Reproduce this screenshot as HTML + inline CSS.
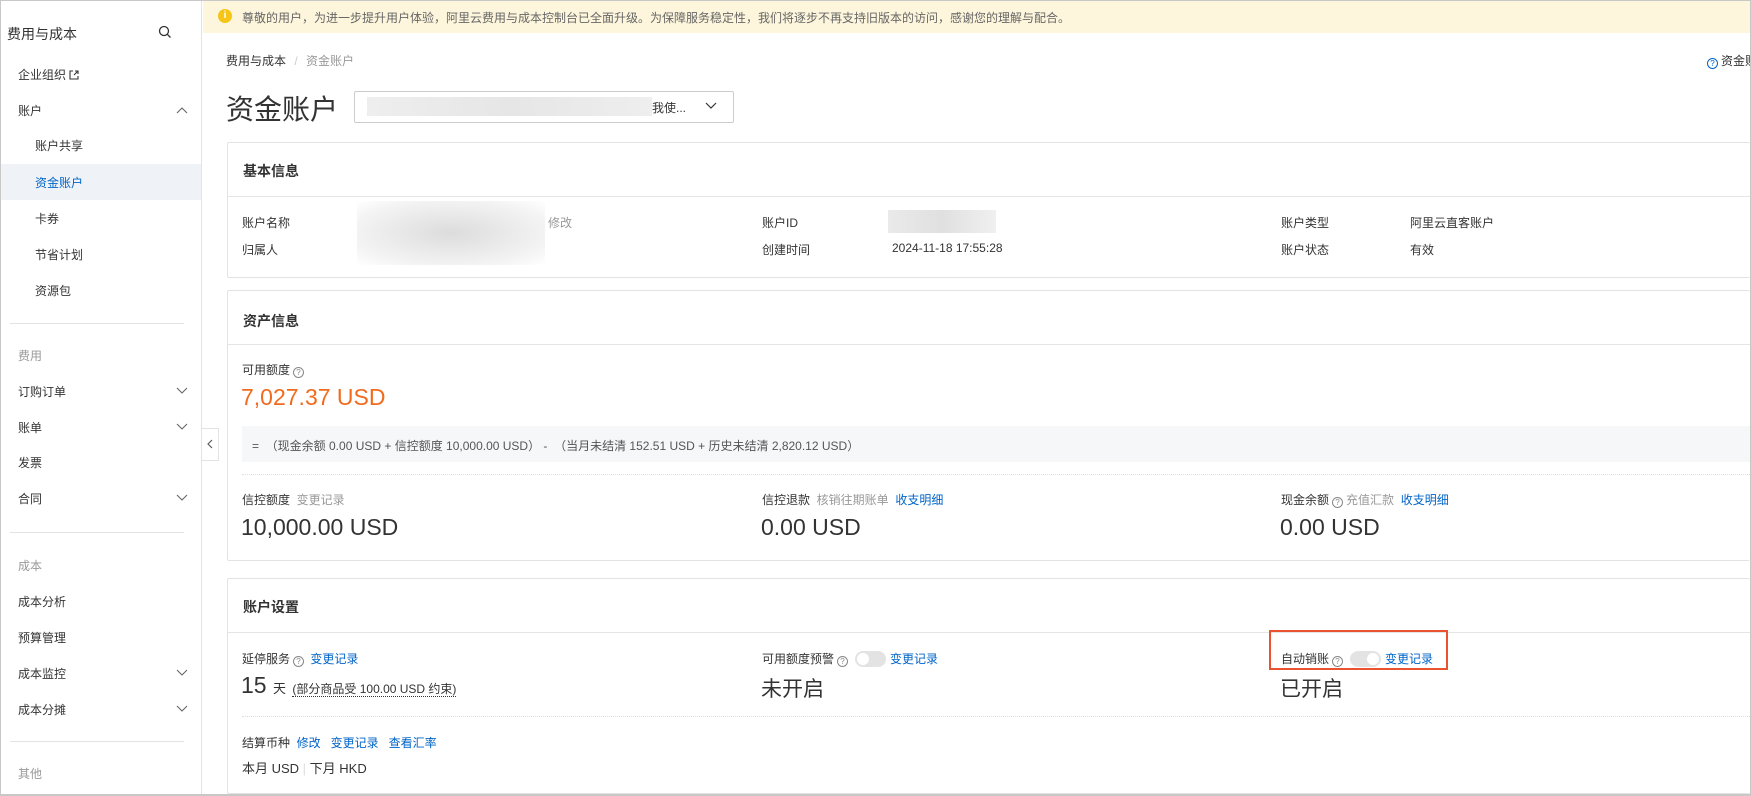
<!DOCTYPE html>
<html><head><meta charset="utf-8">
<style>
*{margin:0;padding:0;box-sizing:border-box}
body{width:1751px;height:796px;overflow:hidden;background:#fff;font-family:"Liberation Sans","Noto Sans CJK SC",sans-serif;font-size:12px;color:#333;position:relative}
.a{position:absolute;white-space:nowrap}
.frame{position:absolute;left:0;top:0;width:1751px;height:796px;border:1px solid #c8c8c8;border-bottom-width:2px;pointer-events:none}
.side{position:absolute;left:0;top:0;width:202px;height:796px;border-right:1px solid #e3e3e3;background:#fff}
.si{position:absolute;left:18px;font-size:12px;color:#333;line-height:16px}
.sub{left:35px}
.grp{color:#999}
.div{position:absolute;left:10px;width:174px;height:1px;background:#e3e3e3}
.chev{position:absolute;left:176px;width:12px;height:8px}
.card{position:absolute;left:227px;width:1523px;border:1px solid #e3e3e3;border-right:none;border-radius:2px}
.ct{position:absolute;left:15px;font-size:14px;font-weight:bold;color:#333}
.hl{position:absolute;left:0;right:0;height:1px;background:#e5e5e5}
.lbl{color:#333}
.blue{color:#0064c8}
.grey{color:#999}
.big{font-size:23px;color:#333}
.q{display:inline-block;width:11px;height:11px;border:1px solid #888;border-radius:50%;font-size:8px;line-height:9px;text-align:center;color:#888;vertical-align:-1px;margin:0 3px}
.tg{display:inline-block;width:31px;height:16px;border-radius:8px;background:#e3e3e3;position:relative;vertical-align:-4px;margin:0 4px}
.tg:after{content:"";position:absolute;top:2px;width:12px;height:12px;border-radius:50%;background:#fff}
.tg.l:after{left:2px}
.tg.r:after{right:2px}
</style></head><body>

<div class="side">
  <div class="a" style="left:7px;top:24px;font-size:14px;color:#333">费用与成本</div>
  <svg class="a" style="left:158px;top:25px" width="14" height="14" viewBox="0 0 14 14"><circle cx="6" cy="6" r="4.5" fill="none" stroke="#333" stroke-width="1.3"/><line x1="9.3" y1="9.3" x2="12.5" y2="12.5" stroke="#333" stroke-width="1.3"/></svg>
  <div class="si" style="top:67px">企业组织 <svg width="10" height="10" viewBox="0 0 10 10" style="vertical-align:-1px"><path d="M4 1H1v8h8V6M6 1h3v3M9 1L5 5" fill="none" stroke="#333" stroke-width="1.1"/></svg></div>
  <div class="si" style="top:103px">账户</div>
  <svg class="chev" style="top:106px" viewBox="0 0 12 8"><path d="M1 7L6 2l5 5" fill="none" stroke="#666" stroke-width="1.1"/></svg>
  <div class="si sub" style="top:138px">账户共享</div>
  <div class="a" style="left:0;top:164px;width:201px;height:36px;background:#eff3f8"></div>
  <div class="si sub" style="top:175px;color:#0064c8">资金账户</div>
  <div class="si sub" style="top:211px">卡券</div>
  <div class="si sub" style="top:247px">节省计划</div>
  <div class="si sub" style="top:283px">资源包</div>
  <div class="div" style="top:323px"></div>
  <div class="si grp" style="top:348px">费用</div>
  <div class="si" style="top:384px">订购订单</div>
  <svg class="chev" style="top:387px" viewBox="0 0 12 8"><path d="M1 1l5 5 5-5" fill="none" stroke="#666" stroke-width="1.1"/></svg>
  <div class="si" style="top:420px">账单</div>
  <svg class="chev" style="top:423px" viewBox="0 0 12 8"><path d="M1 1l5 5 5-5" fill="none" stroke="#666" stroke-width="1.1"/></svg>
  <div class="si" style="top:455px">发票</div>
  <div class="si" style="top:491px">合同</div>
  <svg class="chev" style="top:494px" viewBox="0 0 12 8"><path d="M1 1l5 5 5-5" fill="none" stroke="#666" stroke-width="1.1"/></svg>
  <div class="div" style="top:532px"></div>
  <div class="si grp" style="top:558px">成本</div>
  <div class="si" style="top:594px">成本分析</div>
  <div class="si" style="top:630px">预算管理</div>
  <div class="si" style="top:666px">成本监控</div>
  <svg class="chev" style="top:669px" viewBox="0 0 12 8"><path d="M1 1l5 5 5-5" fill="none" stroke="#666" stroke-width="1.1"/></svg>
  <div class="si" style="top:702px">成本分摊</div>
  <svg class="chev" style="top:705px" viewBox="0 0 12 8"><path d="M1 1l5 5 5-5" fill="none" stroke="#666" stroke-width="1.1"/></svg>
  <div class="div" style="top:741px"></div>
  <div class="si grp" style="top:766px">其他</div>
</div>
<div class="a" style="left:202px;top:428px;width:17px;height:33px;border:1px solid #e3e3e3;border-left:none;background:#fff"></div>
<svg class="a" style="left:206px;top:439px" width="8" height="10" viewBox="0 0 8 10"><path d="M6 1L2 5l4 4" fill="none" stroke="#555" stroke-width="1.1"/></svg>

<div class="a" style="left:203px;top:0;width:1548px;height:33px;background:#fdf6dc"></div>
<div class="a" style="left:218px;top:9px;width:14px;height:14px;border-radius:50%;background:#f5c518;color:#fff;font-size:10px;font-weight:bold;text-align:center;line-height:14px">i</div>
<div class="a" style="left:242px;top:9px;color:#666;font-size:12px">尊敬的用户，为进一步提升用户体验，阿里云费用与成本控制台已全面升级。为保障服务稳定性，我们将逐步不再支持旧版本的访问，感谢您的理解与配合。</div>

<div class="a" style="left:226px;top:52px;font-size:12px;color:#333">费用与成本 <span style="color:#ccc;margin:0 5px">/</span> <span style="color:#999">资金账户</span></div>
<div class="a" style="left:1704px;top:52px;font-size:12px;color:#333"><span class="q" style="border-color:#0064c8;color:#0064c8">?</span>资金账</div>

<div class="a" style="left:226px;top:88px;font-size:28px;color:#333">资金账户</div>
<div class="a" style="left:354px;top:91px;width:380px;height:32px;border:1px solid #ccc;border-radius:2px"></div>
<div class="a" style="left:367px;top:97px;width:285px;height:19px;background:linear-gradient(90deg,#eee,#e6e6e6,#eee)"></div>
<div class="a" style="left:652px;top:99px;font-size:12px;color:#333">我使...</div>
<svg class="a" style="left:705px;top:102px" width="12" height="8" viewBox="0 0 12 8"><path d="M1 1l5 5 5-5" fill="none" stroke="#333" stroke-width="1.2"/></svg>

<div class="card" style="top:142px;height:136px">
  <div class="ct" style="top:18px">基本信息</div>
  <div class="hl" style="top:53px"></div>
</div>
<div class="a lbl" style="left:242px;top:214px">账户名称</div>
<div class="a lbl" style="left:242px;top:241px">归属人</div>
<div class="a" style="left:357px;top:201px;width:188px;height:64px;background:radial-gradient(ellipse at 50% 50%,#dcdcdc,#f4f4f4 75%,#fff)"></div>
<div class="a grey" style="left:548px;top:214px">修改</div>
<div class="a lbl" style="left:762px;top:214px">账户ID</div>
<div class="a" style="left:888px;top:210px;width:108px;height:23px;background:linear-gradient(90deg,#eaeaea,#e0e0e0,#f0f0f0)"></div>
<div class="a lbl" style="left:762px;top:241px">创建时间</div>
<div class="a lbl" style="left:892px;top:241px">2024-11-18 17:55:28</div>
<div class="a lbl" style="left:1281px;top:214px">账户类型</div>
<div class="a lbl" style="left:1410px;top:214px">阿里云直客账户</div>
<div class="a lbl" style="left:1281px;top:241px">账户状态</div>
<div class="a lbl" style="left:1410px;top:241px">有效</div>

<div class="card" style="top:290px;height:271px">
  <div class="ct" style="top:20px">资产信息</div>
  <div class="hl" style="top:53px"></div>
</div>
<div class="a lbl" style="left:242px;top:361px">可用额度<span class="q">?</span></div>
<div class="a" style="left:241px;top:384px;font-size:23px;color:#f26b1d">7,027.37 USD</div>
<div class="a" style="left:242px;top:426px;width:1508px;height:36px;background:#f6f7f9"></div>
<div class="a" style="left:252px;top:437px;font-size:12px;color:#555">=&nbsp;&nbsp;（现金余额 0.00 USD + 信控额度 10,000.00 USD）&nbsp;-&nbsp;&nbsp;（当月未结清 152.51 USD + 历史未结清 2,820.12 USD）</div>
<div class="a" style="left:242px;top:474px;width:1508px;border-top:1px dotted #ddd"></div>
<div class="a lbl" style="left:242px;top:491px">信控额度 <span class="grey">&nbsp;变更记录</span></div>
<div class="a big" style="left:241px;top:514px">10,000.00 USD</div>
<div class="a lbl" style="left:762px;top:491px">信控退款 <span class="grey">&nbsp;核销往期账单</span> <span class="blue">&nbsp;收支明细</span></div>
<div class="a big" style="left:761px;top:514px">0.00 USD</div>
<div class="a lbl" style="left:1281px;top:491px">现金余额<span class="q">?</span><span class="grey">充值汇款</span> <span class="blue">&nbsp;收支明细</span></div>
<div class="a big" style="left:1280px;top:514px">0.00 USD</div>

<div class="card" style="top:578px;height:216px">
  <div class="ct" style="top:18px">账户设置</div>
  <div class="hl" style="top:53px"></div>
</div>
<div class="a lbl" style="left:242px;top:650px">延停服务<span class="q">?</span> <span class="blue">变更记录</span></div>
<div class="a" style="left:241px;top:672px;font-size:23px;color:#333">15 <span style="font-size:13px">天</span> <span style="font-size:12px;border-bottom:1px dotted #333">(部分商品受 100.00 USD 约束)</span></div>
<div class="a lbl" style="left:762px;top:650px">可用额度预警<span class="q">?</span><span class="tg l"></span><span class="blue">变更记录</span></div>
<div class="a" style="left:761px;top:673px;font-size:21px;color:#333">未开启</div>
<div class="a lbl" style="left:1281px;top:650px">自动销账<span class="q">?</span><span class="tg r"></span><span class="blue">变更记录</span></div>
<div class="a" style="left:1280px;top:673px;font-size:21px;color:#333">已开启</div>
<div class="a" style="left:1269px;top:630px;width:179px;height:40px;border:2.5px solid #e9532f"></div>
<div class="a" style="left:242px;top:716px;width:1508px;border-top:1px dotted #ddd"></div>
<div class="a lbl" style="left:242px;top:734px">结算币种 <span class="blue">&nbsp;修改&nbsp;&nbsp;&nbsp;变更记录&nbsp;&nbsp;&nbsp;查看汇率</span></div>
<div class="a" style="left:242px;top:758px;font-size:13px;color:#333">本月 USD <span style="color:#ddd">|</span> 下月 HKD</div>

<div class="frame"></div>
</body></html>
